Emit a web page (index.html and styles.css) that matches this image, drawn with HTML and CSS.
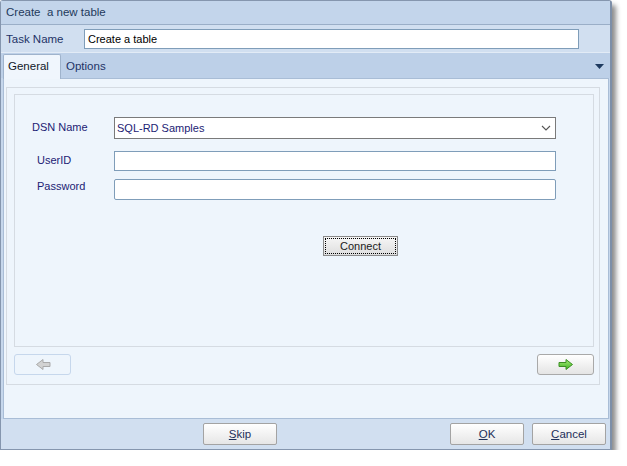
FILE: index.html
```html
<!DOCTYPE html>
<html>
<head>
<meta charset="utf-8">
<link rel="stylesheet" href="styles.css">
</head>
<body>
<div class="window">
  <div class="titlebar">Create&nbsp; a new table</div>
  <div class="taskrow">
    <span class="task-label">Task Name</span>
    <div class="field task-input">Create a table</div>
  </div>
  <div class="lower">
    <div class="tabstrip">
      <div class="tab active">General</div>
      <div class="tab">Options</div>
      <div class="tab-menu">
        <svg width="9" height="5" viewBox="0 0 9 5"><polygon points="0,0 9,0 4.5,5" fill="#1e3a5f"/></svg>
      </div>
    </div>
    <div class="tabbody">
      <div class="outer-frame">
        <div class="inner-frame">
          <div class="row row-dsn">
            <span class="lbl lbl-dsn">DSN Name</span>
            <div class="select">SQL-RD Samples
              <svg class="chev" width="10" height="6" viewBox="0 0 10 6"><polyline points="1,1 5,5 9,1" fill="none" stroke="#555" stroke-width="1.1"/></svg>
            </div>
          </div>
          <div class="row row-user">
            <span class="lbl lbl-user">UserID</span>
            <div class="field input-user"></div>
          </div>
          <div class="row row-pass">
            <span class="lbl lbl-pass">Password</span>
            <div class="field input-pass"></div>
          </div>
          <div class="connect-row">
            <div class="connect"><span class="focus">Connect</span></div>
          </div>
        </div>
        <div class="nav-row">
          <div class="nav back">
            <svg width="16" height="11" viewBox="0 0 16 11">
              <polygon points="15,3.5 8,3.5 8,0.5 1.5,5.5 8,10.5 8,7.5 15,7.5" fill="#d2d2d2" stroke="#a9a9a9" stroke-width="1"/>
            </svg>
          </div>
          <div class="nav next">
            <svg width="16" height="11" viewBox="0 0 16 11">
              <defs>
                <linearGradient id="g" x1="0" y1="0" x2="0" y2="1">
                  <stop offset="0" stop-color="#a6ec78"/>
                  <stop offset="1" stop-color="#3fb221"/>
                </linearGradient>
              </defs>
              <polygon points="1,3.5 8,3.5 8,0.5 14.5,5.5 8,10.5 8,7.5 1,7.5" fill="url(#g)" stroke="#3a8e22" stroke-width="1"/>
            </svg>
          </div>
        </div>
      </div>
    </div>
    <div class="footer">
      <div class="btn skip"><u>S</u>kip</div>
      <div class="btn ok"><u>O</u>K</div>
      <div class="btn cancel"><u>C</u>ancel</div>
    </div>
  </div>
</div>
</body>
</html>
```
FILE: styles.css
```css
* { box-sizing: border-box; }
body {
  margin: 0;
  background: #ffffff;
  font-family: "Liberation Sans", Arial, sans-serif;
  font-size: 11px;
  color: #1c2c6e;
}
.window {
  width: 612px;
  height: 450px;
  border: 1px solid #8596ae;
  border-right: 2px solid #7d8fa8;
  border-radius: 3px 3px 0 0;
  background: #c6d7ec;
  display: flex;
  flex-direction: column;
  box-shadow: 4px 5px 5px rgba(0, 0, 0, 0.45);
}
.titlebar {
  height: 24px;
  background: #c3d5eb;
  border-bottom: 1px solid #9aaec7;
  padding-left: 5px;
  line-height: 23px;
  font-size: 11.5px;
  color: #1e395b;
}
.taskrow {
  height: 28px;
  background: #d1dff0;
  border-bottom: 1px solid #e2ebf6;
  display: flex;
  align-items: center;
  padding-left: 5px;
}
.task-label {
  width: 78px;
  font-size: 11.5px;
  color: #1e3366;
}
.field {
  background: #ffffff;
  border: 1px solid #7f9db9;
}
.task-input {
  width: 495px;
  height: 20px;
  line-height: 18px;
  padding-left: 3px;
  color: #000;
  font-size: 11px;
}
.lower {
  flex: 1;
  display: flex;
  flex-direction: column;
  padding: 0 1px 0 2px;
  background: #c6d7ec;
}
.tabstrip {
  height: 25px;
  background: #bdd0e8;
  display: flex;
  align-items: flex-end;
  margin: 0 -1px 0 -2px;
  padding: 0 1px 0 2px;
}
.tab {
  height: 24px;
  padding: 6px 5px 0 5px;
  font-size: 11.5px;
  color: #1e3366;
}
.tab.active {
  width: 58px;
  height: 25px;
  margin-bottom: -1px;
  padding: 5px 0 0 4px;
  background: #f0f6fd;
  border: 1px solid #9fb3cc;
  border-bottom: none;
  border-radius: 2px 2px 0 0;
  color: #101828;
  position: relative;
  z-index: 1;
}
.tab-menu {
  margin-left: auto;
  margin-right: 5px;
  align-self: center;
  display: flex;
  padding-top: 1px;
}
.tabbody {
  height: 341px;
  background: #eef5fc;
  border: 1px solid #a9bdd6;
  padding: 8px 0 0 2px;
}
.outer-frame {
  width: 594px;
  height: 298px;
  border: 1px solid #d5dbe2;
  padding: 6px 0 0 7px;
}
.inner-frame {
  width: 580px;
  height: 253px;
  border: 1px solid #d5dbe2;
  padding-top: 22px;
}
.row {
  display: flex;
  align-items: flex-start;
}
.lbl {
  width: 99px;
  font-size: 11px;
  color: #1c2274;
}
.lbl-dsn { padding: 4px 0 0 17px; }
.lbl-user { padding: 3px 0 0 22px; }
.lbl-pass { padding: 1px 0 0 22px; }
.row-dsn { height: 22px; margin-bottom: 12px; }
.row-user { height: 20px; margin-bottom: 8px; }
.row-pass { height: 21px; }
.select {
  width: 442px;
  height: 22px;
  background: #fff;
  border: 1px solid #7a7a7a;
  padding-left: 2px;
  line-height: 20px;
  color: #1c2274;
  font-size: 11px;
  display: flex;
  align-items: center;
}
.chev {
  margin-left: auto;
  margin-right: 4px;
}
.input-user { width: 442px; height: 20px; }
.input-pass { width: 442px; height: 21px; border-radius: 2px; }
.connect-row {
  margin-top: 36px;
  padding-left: 308px;
}
.connect {
  width: 75px;
  height: 20px;
  border: 1px solid #8a8a8a;
  background: linear-gradient(#f6f6f6, #dedede);
  padding: 1px;
}
.focus {
  display: block;
  height: 16px;
  border: 1px dotted #000;
  text-align: center;
  line-height: 14px;
  color: #1a1a1a;
  font-size: 11px;
}
.nav-row {
  display: flex;
  justify-content: space-between;
  margin-top: 7px;
  margin-right: 5px;
}
.nav {
  width: 57px;
  height: 21px;
  border-radius: 3px;
  display: flex;
  align-items: center;
  justify-content: center;
}
.nav.back {
  border: 1px solid #c6d7ec;
  background: #eef5fc;
}
.nav.next {
  border: 1px solid #a9a9a9;
  background: linear-gradient(#ffffff, #e4e4e4);
}
.footer {
  height: 30px;
  display: flex;
  align-items: flex-start;
  background: #d1dff0;
  margin: 0 -1px 0 -2px;
  padding: 4px 4px 0 202px;
  gap: 8px;
}
.btn {
  width: 74px;
  height: 22px;
  border: 1px solid #a3a3a3;
  border-radius: 2px;
  background: linear-gradient(#ffffff, #e6e6e6);
  text-align: center;
  line-height: 20px;
  font-size: 11.5px;
  color: #1e2f5a;
}
.btn.ok { margin-left: auto; }
```
